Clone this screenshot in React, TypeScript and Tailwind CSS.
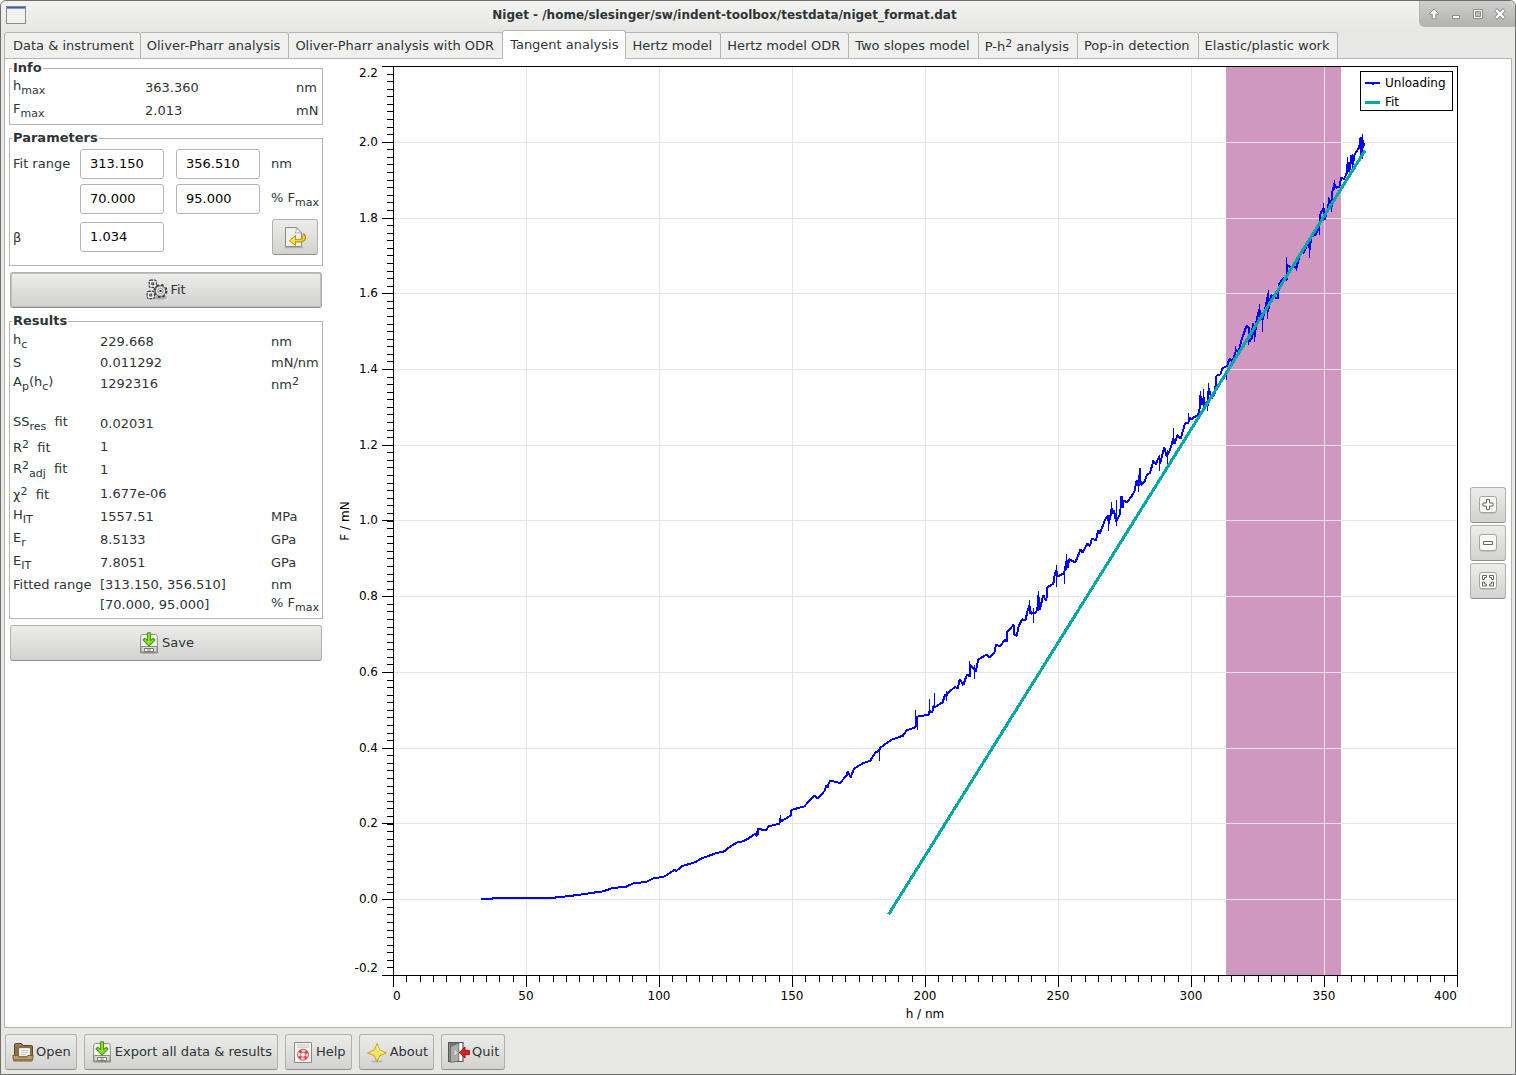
import React from 'react';
import type { ReactNode } from 'react';

const tabs: { label: ReactNode; id: string }[] = [
  { id: 'data', label: 'Data & instrument' },
  { id: 'op', label: 'Oliver-Pharr analysis' },
  { id: 'op-odr', label: 'Oliver-Pharr analysis with ODR' },
  { id: 'tangent', label: 'Tangent analysis' },
  { id: 'hertz', label: 'Hertz model' },
  { id: 'hertz-odr', label: 'Hertz model ODR' },
  { id: 'slopes', label: 'Two slopes model' },
  { id: 'ph2', label: <>P-h<Sup>2</Sup> analysis</> },
  { id: 'popin', label: 'Pop-in detection' },
  { id: 'elastic', label: 'Elastic/plastic work' },
];

type Row = { label: ReactNode; value: string; unit?: ReactNode; height: string };

const results: Row[] = [
  { label: <>h<Sub>c</Sub></>, value: '229.668', unit: 'nm', height: 'h-[21px]' },
  { label: 'S', value: '0.011292', unit: 'mN/nm', height: 'h-[21px]' },
  { label: <>A<Sub>p</Sub>(h<Sub>c</Sub>)</>, value: '1292316', unit: <>nm<Sup>2</Sup></>, height: 'h-[21px]' },
  { label: '', value: '', height: 'h-[18px]' },
  { label: <>SS<Sub>res</Sub>&nbsp; fit</>, value: '0.02031', height: 'h-[23px]' },
  { label: <>R<Sup>2</Sup>&nbsp; fit</>, value: '1', height: 'h-[23px]' },
  { label: <>R<Sup>2</Sup><Sub>adj</Sub>&nbsp; fit</>, value: '1', height: 'h-[23px]' },
  { label: <>χ<Sup>2</Sup>&nbsp; fit</>, value: '1.677e-06', height: 'h-6' },
  { label: <>H<Sub>IT</Sub></>, value: '1557.51', unit: 'MPa', height: 'h-[23px]' },
  { label: <>E<Sub>r</Sub></>, value: '8.5133', unit: 'GPa', height: 'h-[23px]' },
  { label: <>E<Sub>IT</Sub></>, value: '7.8051', unit: 'GPa', height: 'h-[23px]' },
  { label: 'Fitted range', value: '[313.150, 356.510]', unit: 'nm', height: 'h-5' },
  { label: '', value: '[70.000, 95.000]', unit: <>% F<Sub>max</Sub></>, height: 'h-5' },
];

function Sub({ children }: { children: ReactNode }) {
  return <span className="align-[-4px] text-[11px] leading-[13px]">{children}</span>;
}

function Sup({ children }: { children: ReactNode }) {
  return <span className="align-[4px] text-[11px] leading-[13px]">{children}</span>;
}

/* ---------- icons ---------- */

function DiskIcon() {
  return (
    <svg viewBox="0 0 22 22" className="h-[22px] w-[22px] shrink-0" aria-hidden="true">
      <ellipse cx="11" cy="20.8" rx="10" ry="1.2" fill="#000" opacity=".2" />
      <path d="M4.5 2.5h13q1.500 0 1.700 2l.3 10v6h-17v-6l.3-10q.2-2 1.700-2z" fill="#f4f4f2" stroke="#8b8d88" />
      <path d="M3 14.5h16v5.5H3z" fill="#d8d9d6" stroke="#8b8d88" />
      <path d="M6.500 16.500h9v3h-9z" fill="#fff" stroke="#777" />
      <path d="M9.500 18h3" stroke="#666" />
      <path d="M9.500.8h3v7.700l3-2.200 1.500 1.500-6 6.400-6-6.400 1.500-1.500 3 2.200z" fill="#8ae234" stroke="#4e9a06" strokeWidth="1.100" strokeLinejoin="round" />
    </svg>
  );
}

function GearsIcon() {
  return (
    <svg viewBox="0 0 22 22" className="h-[22px] w-[22px] shrink-0" aria-hidden="true">
      <ellipse cx="14" cy="18.500" rx="7" ry="2" fill="#000" opacity=".2" />
      <circle cx="14.5" cy="12" r="6" fill="none" stroke="#33383a" strokeWidth="2" strokeDasharray="2.360 2.360" />
      <circle cx="14.5" cy="12" r="5.300" fill="#dcdddb" stroke="#33383a" strokeWidth=".8" />
      <circle cx="14.5" cy="12" r="2.600" fill="#fafafa" stroke="#777" strokeWidth=".8" />
      <rect x="13.500" y="11" width="2" height="2" fill="#222" />
      <rect x="3.2" y="1.2" width="7.2" height="7.2" rx="1.500" fill="#fff" stroke="#33383a" strokeWidth="1.2" strokeDasharray="2.600 .8" />
      <rect x="5.8" y="3.8" width="2" height="2" fill="#fff" stroke="#222" strokeWidth=".9" />
      <rect x="1.2" y="12.4" width="7.2" height="7.2" rx="1.500" fill="#fff" stroke="#33383a" strokeWidth="1.2" strokeDasharray="2.600 .8" />
      <rect x="3.8" y="15" width="2" height="2" fill="#fff" stroke="#222" strokeWidth=".9" />
    </svg>
  );
}

function RevertIcon() {
  return (
    <svg viewBox="0 0 24 24" className="h-6 w-6" aria-hidden="true">
      <path d="M2 22.500h18" stroke="#000" strokeWidth="1.5" opacity=".18" />
      <path d="M2.500 2.500H14l4.500 5.500v13.500h-16z" fill="#f1f1f0" stroke="#888a85" strokeLinejoin="round" />
      <path d="M13 2.5c.6 2.200.3 4-.8 5.600 2.300-.5 4.500-.4 6.300-.1z" fill="#fff" stroke="#999b96" strokeWidth=".8" />
      <path d="M19.700 9.500c3 2.300 1.800 6.200-3.200 6.200h-4.500" fill="none" stroke="#b78b00" strokeWidth="3.600" />
      <path d="M12.500 10.700 6.500 15.700l6 4.800z" fill="#fce94f" stroke="#b78b00" strokeLinejoin="round" />
      <path d="M19.800 10.200c2.300 2 1.400 5.500-3.300 5.500h-6" fill="none" stroke="#f5d53c" strokeWidth="1.700" />
    </svg>
  );
}

function FolderIcon() {
  return (
    <svg viewBox="0 0 22 22" className="h-[22px] w-[22px] shrink-0" aria-hidden="true">
      <path d="M2.500 16V3.500q0-1 1-1h6l1.400 2h8.600q1 0 1 1V16z" fill="#8a6f4c" stroke="#5c4626" />
      <path d="M3.5 4h5.500" stroke="#b29a77" />
      <path d="M7.500 7.500h10V15h-10z" fill="#f7f7f5" stroke="#e6e6e2" />
      <path d="M9 9.500h7M9 11.500h7M9 13.500h5" stroke="#b8b8b4" strokeWidth=".8" />
      <path d="M.8 14.5h5.400l1 1.400h7.600l1-1.400h5.400l-.7 4.800q-.1.7-.8.7H2.300q-.7 0-.8-.7z" fill="#b99b72" stroke="#7a5f3a" />
      <path d="M1.500 18.800h19" stroke="#86683f" />
    </svg>
  );
}

function HelpIcon() {
  return (
    <svg viewBox="0 0 22 22" className="h-[22px] w-[22px] shrink-0" aria-hidden="true">
      <path d="M2.5 1.5h17v20h-17z" fill="#f6f6f5" stroke="#888a85" />
      <path d="M5 4h12M5 6.200h12" stroke="#b9bab7" strokeWidth=".9" />
      <circle cx="11" cy="13.700" r="4" fill="#fff" stroke="#f2dada" strokeWidth="3" />
      <circle cx="11" cy="13.700" r="4" fill="none" stroke="#d94040" strokeWidth="2.600" strokeDasharray="2.600 3.680" strokeDashoffset="-1.840" />
      <circle cx="11" cy="13.700" r="5.500" fill="none" stroke="#c33" strokeWidth=".8" />
      <circle cx="11" cy="13.700" r="2.500" fill="#fff" stroke="#c33" strokeWidth=".8" />
    </svg>
  );
}

function StarIcon() {
  return (
    <svg viewBox="0 0 22 22" className="h-[22px] w-[22px] shrink-0" aria-hidden="true">
      <ellipse cx="11" cy="20.500" rx="6" ry="1.2" fill="#000" opacity=".15" />
      <path d="M11 2.500l2.600 6.500 6.900 3-6.900 2.700L11 21l-2.600-6.300L1.500 12l6.900-3z" fill="#f6e264" stroke="#c4a61c" strokeLinejoin="round" />
      <path d="M11 5.200l1.900 4.700 4.500 2" fill="none" stroke="#fff8c0" strokeWidth=".9" />
    </svg>
  );
}

function QuitIcon() {
  return (
    <svg viewBox="0 0 22 22" className="h-[22px] w-[22px] shrink-0" aria-hidden="true">
      <path d="M.600 1.500h14.400v19H.6z" fill="#fff" stroke="#555753" strokeWidth="1.2" />
      <path d="M1.200 2h9.500v18H1.200z" fill="#6f7173" />
      <path d="M2.500 21.500V5.500L10.800 2v18z" fill="#a9aba8" stroke="#6a6c69" strokeWidth=".8" />
      <path d="M6.500 9.700l2 1.800-2 1.800" fill="none" stroke="#f4f4f4" strokeWidth="1.1" />
      <path d="M11.300 11.500 17 6v3.400h4.500v4.200H17V17z" fill="#e02020" stroke="#930d0d" strokeWidth=".9" strokeLinejoin="round" />
    </svg>
  );
}

function ZoomGlyph({ d }: { d: string }) {
  return (
    <svg viewBox="0 0 18 18" className="h-[18px] w-[18px]" aria-hidden="true">
      <rect x=".5" y="1" width="17" height="16.5" rx="2.5" fill="#777" opacity=".5" />
      <rect x=".5" y=".5" width="17" height="16" rx="2.5" fill="#f9f9f8" stroke="#a5a6a3" />
      <path d={d} fill="#fff" stroke="#666864" />
    </svg>
  );
}

/* ---------- chart ---------- */

// Recorded curve, kept as runs in thirds of a unit from each run's origin.
const trace = [
  {
    x: 340, y: 860,
    points: '423,117 458,117 459,114 645,114 648,111 685,109 710,105 735,102 760,98 790,94 818,84 858,80 880,70 918,66 940,55 972,50',
  },
  {
    x: 660, y: 600,
    points: '12,830 45,809 49,813 65,799 110,785 120,777 167,760 193,754 213,738 230,728 248,724 266,715 284,702 290,708 294,686 319,692 325,679 358,671 361,656 363,664 392,647 394,630 433,619 463,586 473,596 496,570 497,560 501,556 503,562 507,548 511,542 540,549 560,526 563,515 572,532 582,506 610,489 631,482 645,459 657,451 661,443 693,420 720,410 728,408 740,391 765,382 769,378 770,350 806,344 808,333 817,337 821,315 824,322 848,307 855,285 860,285 864,278 885,261 893,266 899,238 910,255 921,223 929,230 930,193 943,208 947,215 955,179 979,164 989,172 1003,158 1008,134 1021,139 1034,120 1041,125 1042,95 1061,74 1063,103 1070,108 1076,78 1087,57 1096,62',
  },
  {
    x: 940, y: 370,
    points: '256,752 264,718 268,705 273,732 281,728 288,728 294,705 295,675 299,720 310,675 316,690 319,690 322,652 340,641 345,610 349,600 352,620 372,610 374,600 380,570 382,595 388,567 406,578 422,537 427,548 443,520 450,528 455,507 468,510 475,480 479,492 495,450 503,437 507,460 515,415 518,432 522,422 528,455 541,430 543,380 547,380 549,415 551,391 561,397 575,378 583,365 590,332 596,348 600,295 602,345 613,336 622,312 630,310 640,272 647,283 657,260 660,280 673,233 680,260 690,240 700,205 704,222 712,195 722,207 735,160 745,160 747,142 753,148 773,135 778,125 781,75 787,105 791,82 794,110 800,95 803,108 806,55 815,85 825,70 829,17',
  },
  {
    x: 1180, y: 120,
    points: '109,767 121,763 127,745 142,738 145,725 150,715 157,728 168,690 175,700 183,665 200,616 207,625 208,665 215,655 219,608 224,650 230,600 238,568 243,585 248,600 258,555 265,520 264,575 273,525 285,532 293,535 298,490 310,475 320,480 320,435 330,440 343,440 349,445 360,405 373,395 385,365 390,390 393,350 407,345 418,320 420,285 426,272 431,265 434,300 445,260 447,235 455,262 457,215 463,190 468,203 478,200 484,172 492,178 500,160 503,128 508,155 514,105 518,135 524,103 538,82 540,55 544,115 547,52 549,85 552,70',
  },
];

const spikes = [
  'M780.5 815v8M879.5 748v12.500M915.500 710v16M917.500 718v12M934.500 693v15M969.500 661v14M974.500 665v14M929 699v12M946 691v10M758.500 829v6',
  'M1029.500 600v14M1033.500 608v15M1038.500 591v20M1056.500 565v22M1066.500 554v16M1064.500 570v14M1108.500 515v16M1111.500 502v14M1116.500 500v26M1138.500 478v14M1159.500 455v16M1173.500 428v16M1167 450v16M1188.500 413v10',
  'M1200.500 391v15M1203.500 389v20M1207 391v20M1208.500 383v14M1226.500 372v8M1235.500 346v10M1248.500 337v8M1254.500 328v14M1259.500 304v14M1262.500 315v17M1268.500 290v14M1267.500 303v16M1286.500 257v20M1296.500 262v9M1309.500 246v12M1319.500 220v15M1323.500 203v18M1328.500 197v10M1331.500 200v12M1334.500 180v10M1347.500 157v13M1352.500 154v14M1360.500 137v20M1362.500 134v25',
];

const xLabels = [50, 100, 150, 200, 250, 300, 350];
const yLabels = ['2.0', '1.8', '1.6', '1.4', '1.2', '1.0', '0.8', '0.6', '0.4', '0.2', '0.0'];
const yMajor = [142, 218, 293, 369, 445, 520, 596, 672, 748, 823, 899];

function Chart() {
  const xMinor = Array.from({ length: 81 }, (_, i) => 393 + Math.round(i * 13.3));
  const yMinor = Array.from({ length: 121 }, (_, i) => 66 + Math.round(i * 7.575)).filter((y) => y <= 975);

  return (
    <svg
      viewBox="331 59 1129 968"
      className="block h-auto w-full font-['DejaVu_Sans',sans-serif] text-[12px]"
      role="img"
      aria-label="F / mN against h / nm"
    >
      <g shapeRendering="crispEdges" fill="none">
        <rect x="1226" y="67" width="115" height="908" fill="#d098c0" />
        {xLabels.map((v) => (
          <path key={v} d={`M${393.5 + v * 2.66} 67V975`} stroke="#e5e5e5" />
        ))}
        {yMajor.map((y) => (
          <path key={y} d={`M394 ${y + 0.5}H1457`} stroke="#e5e5e5" />
        ))}

        {trace.map((run) => (
          <g key={run.x} transform={`translate(${run.x} ${run.y}) scale(0.33333)`}>
            <polyline points={run.points} stroke="#0000ff" strokeWidth="6" strokeLinejoin="bevel" />
          </g>
        ))}
        {spikes.map((d) => (
          <path key={d} d={d} stroke="#0000ff" />
        ))}
        <path d="M888.500 914.500 1365 150.500" stroke="#00a8a8" strokeWidth="3" />

        <rect x="393.5" y="66.5" width="1064" height="909" stroke="#000" />
        {xMinor.filter((x) => x <= 1457).map((x) => (
          <path key={x} d={`M${x + 0.5} 976v6`} stroke="#000" />
        ))}
        {yMinor.map((y) => (
          <path key={y} d={`M387 ${y + 0.5}h6`} stroke="#000" />
        ))}
        {[0, ...xLabels, 400].map((v) => (
          <path key={v} d={`M${393.5 + v * 2.66} 976v11`} stroke="#000" />
        ))}
        {[66, ...yMajor, 975].map((y) => (
          <path key={y} d={`M382 ${y + 0.5}h11`} stroke="#000" />
        ))}

        <rect x="1360.5" y="71.5" width="92" height="39" fill="#fff" stroke="#000" />
        <path d="M1365 83h15" stroke="#0000ff" strokeWidth="2" />
        <path d="M1372 84.500h2" stroke="#0000ff" />
        <path d="M1365 102.500h15" stroke="#00a8a8" strokeWidth="3" />
      </g>

      <g fill="#000">
        <text x="1385" y="87">Unloading</text>
        <text x="1385" y="106">Fit</text>
        <text x="378" y="77" textAnchor="end">2.2</text>
        {yLabels.map((label, i) => (
          <text key={label} x="378" y={yMajor[i] + 4} textAnchor="end">{label}</text>
        ))}
        <text x="378" y="972" textAnchor="end">-0.2</text>
        <text x="393" y="1000">0</text>
        {xLabels.map((v) => (
          <text key={v} x={393 + v * 2.66} y="1000" textAnchor="middle">{v}</text>
        ))}
        <text x="1457" y="1000" textAnchor="end">400</text>
        <text x="925" y="1018" textAnchor="middle">h / nm</text>
        <text transform="translate(349 521) rotate(-90)" textAnchor="middle">F / mN</text>
      </g>
    </svg>
  );
}

/* ---------- widgets ---------- */

const buttonBase =
  'flex h-9 items-center justify-center rounded-[3px] border border-[#b0b0ad] border-b-[#8f8f8c] bg-linear-to-b from-[#ececeb] to-[#d2d2d0]';

function ToolButton({ icon, children }: { icon: ReactNode; children: ReactNode }) {
  return (
    <button type="button" className={`${buttonBase} gap-0.5 pr-[5px] pl-1.5 whitespace-nowrap`}>
      {icon}
      <span className="pb-0.5">{children}</span>
    </button>
  );
}

function Group({ title, className, children }: { title: string; className: string; children: ReactNode }) {
  return (
    <fieldset className={`min-w-0 border border-[#b4b4b1] ${className}`}>
      <legend className="-ml-px px-px pb-0.5 leading-[13px] font-bold">{title}</legend>
      {children}
    </fieldset>
  );
}

function NumberField({ id, label, value, className = '' }: { id: string; label?: string; value: string; className?: string }) {
  return (
    <input
      id={id}
      aria-label={label}
      defaultValue={value}
      className={`h-[30px] w-full min-w-0 rounded-[3px] border border-[#b4b4b1] bg-white px-[9px] pb-0.5 text-black ${className}`}
    />
  );
}

function Sidebar() {
  return (
    <div className="flex w-[314px] shrink-0 flex-col gap-1.5 pt-0.5">
      <Group title="Info" className="pr-[3px] pb-0.5 pl-[3px]">
        <table className="w-full table-fixed whitespace-nowrap">
          <tbody>
            <tr className="h-[23px]">
              <th scope="row" className="w-[132px] text-left font-normal">h<Sub>max</Sub></th>
              <td className="w-[151px]">363.360</td>
              <td>nm</td>
            </tr>
            <tr className="h-[23px]">
              <th scope="row" className="text-left font-normal">F<Sub>max</Sub></th>
              <td>2.013</td>
              <td>mN</td>
            </tr>
          </tbody>
        </table>
      </Group>

      <Group title="Parameters" className="pt-[3px] pb-2.5 pl-[3px]">
        <div className="grid grid-cols-[55px_84px_84px_minmax(0,1fr)] items-center gap-x-3 gap-y-[5px] whitespace-nowrap">
          <label htmlFor="range-from" className="pb-0.5">Fit range</label>
          <NumberField id="range-from" value="313.150" />
          <NumberField id="range-to" label="Fit range to, nm" value="356.510" />
          <span className="-ml-px pb-0.5">nm</span>

          <NumberField id="percent-from" label="Fit range from, % Fmax" value="70.000" className="col-start-2" />
          <NumberField id="percent-to" label="Fit range to, % Fmax" value="95.000" />
          <span className="-ml-px">% F<Sub>max</Sub></span>

          <label htmlFor="beta">β</label>
          <NumberField id="beta" value="1.034" />
          <button type="button" aria-label="Reset beta" className={`${buttonBase} col-start-4 w-[46px]`}>
            <RevertIcon />
          </button>
        </div>
      </Group>

      <button type="button" className={`${buttonBase} mx-px gap-0.5 inset-ring inset-ring-[#c0c0bd]`}>
        <GearsIcon />
        <span className="pb-0.5">Fit</span>
      </button>

      <Group title="Results" className="pt-0.5 pr-[3px] pb-1 pl-[3px]">
        <table className="w-full table-fixed whitespace-nowrap">
          <colgroup>
            <col className="w-[87px]" />
            <col className="w-[171px]" />
            <col />
          </colgroup>
          <tbody>
            {results.map((row, i) => (
              <tr key={i} className={row.height}>
                <th scope="row" className="text-left font-normal">{row.label}</th>
                <td>{row.value}</td>
                <td>{row.unit}</td>
              </tr>
            ))}
          </tbody>
        </table>
      </Group>

      <button type="button" className={`${buttonBase} mx-px gap-0.5`}>
        <DiskIcon />
        <span className="pb-0.5">Save</span>
      </button>
    </div>
  );
}

function TitleBar() {
  return (
    <header className="flex h-[29px] items-start rounded-t-md bg-linear-to-b from-[#f3f3f2] to-[#e7e7e5]">
      <svg viewBox="0 0 20 18" className="mt-[5px] ml-[5px] h-[18px] w-5" aria-hidden="true">
        <rect x=".5" y=".5" width="19" height="17" fill="#f1f1ef" stroke="#888a85" />
        <path d="M1 1.500h18" stroke="#3465a4" />
        <path d="M1 2.500h18" stroke="#729fcf" />
      </svg>
      <h1 className="min-w-0 flex-1 truncate pt-[6px] pl-1 text-center text-[12px] leading-4 font-bold">
        Niget - /home/slesinger/sw/indent-toolbox/testdata/niget_format.dat
      </h1>
      <div className="flex h-[26px] w-24 rounded-tr-md rounded-bl-md border-b border-l border-[#b4b4b1] bg-linear-to-b from-[#cfcfce] to-[#b2b2b0] pl-[3px]">
        <button type="button" aria-label="Shade" className="grid w-[22px] place-items-center">
          <svg viewBox="0 0 12 12" className="h-3 w-3"><path d="M6 .800 11 6.200H7.800v4.600H4.200V6.200H1z" fill="#fff" stroke="#8a8a88" strokeLinejoin="round" /></svg>
        </button>
        <button type="button" aria-label="Minimize" className="grid w-[22px] place-items-center">
          <svg viewBox="0 0 12 12" className="h-3 w-3"><path d="M2.500 7.500h7v3h-7z" fill="#fff" stroke="#8a8a88" /></svg>
        </button>
        <button type="button" aria-label="Maximize" className="grid w-[22px] place-items-center">
          <svg viewBox="0 0 12 12" className="h-3 w-3"><path d="M1.500 1.500h9v9h-9z" fill="#fff" stroke="#8a8a88" /><path d="M3.500 3.500h5v5h-5z" fill="#bcbcba" stroke="#8a8a88" /></svg>
        </button>
        <button type="button" aria-label="Close" className="grid w-[22px] place-items-center">
          <svg viewBox="0 0 12 12" className="h-3 w-3"><path d="M1.500 1.500l9 9M10.500 1.500l-9 9" stroke="#8a8a88" strokeWidth="4" /><path d="M2 2l8 8M10 2l-8 8" stroke="#fff" strokeWidth="2.400" /></svg>
        </button>
      </div>
    </header>
  );
}

function TabBar() {
  return (
    <nav role="tablist" className="relative z-10 -mb-px ml-[3px] flex h-[29px] items-end whitespace-nowrap">
      {tabs.map((tab, i) =>
        tab.id === 'tangent' ? (
          <button
            key={tab.id}
            type="button"
            role="tab"
            aria-selected="true"
            className="-ml-px h-[29px] rounded-t-[3px] border border-b-0 border-[#b4b4b1] bg-white px-[7px] pb-px"
          >
            {tab.label}
          </button>
        ) : (
          <button
            key={tab.id}
            type="button"
            role="tab"
            aria-selected="false"
            className={`h-[27px] rounded-tr-[3px] border-t border-r border-b border-[#b4b4b1] bg-[#f0f0ef] ${
              i === 0 ? 'rounded-tl-[3px] border-l pr-1.5 pl-2' : 'pr-2 pl-1.5'
            }`}
          >
            {tab.label}
          </button>
        ),
      )}
    </nav>
  );
}

export default function App() {
  return (
    <div className="flex min-h-screen flex-col rounded-t-md border border-[#6f6f6e] bg-[#e7e7e5] font-['DejaVu_Sans',sans-serif] text-[13px] leading-[15px] text-[#2e3436]">
      <TitleBar />
      <TabBar />

      <main className="mx-[3px] flex flex-1 border border-[#b4b4b1] bg-white pl-1">
        <Sidebar />
        <div className="ml-2 min-w-0 flex-1">
          <Chart />
        </div>
        <div className="mr-[5px] ml-2.5 flex w-9 shrink-0 flex-col justify-center gap-0.5">
          <button type="button" aria-label="Zoom in" className={buttonBase}>
            <ZoomGlyph d="M7.500 3.500h3v3.500h3.500v3h-3.500v3.500h-3v-3.500H4V7h3.500z" />
          </button>
          <button type="button" aria-label="Zoom out" className={buttonBase}>
            <ZoomGlyph d="M4.500 7.500h9v3h-9z" />
          </button>
          <button type="button" aria-label="Zoom to fit" className={buttonBase}>
            <ZoomGlyph d="M3.500 7.500v-4h4v2h-2v2zM14.500 7.500v-4h-4v2h2v2zM3.500 10v4h4v-2h-2v-2zM14.500 10v4h-4v-2h2v-2z" />
          </button>
        </div>
      </main>

      <footer className="flex flex-wrap gap-[7px] px-1 pt-1.5 pb-1">
        <ToolButton icon={<FolderIcon />}>Open</ToolButton>
        <ToolButton icon={<DiskIcon />}>Export all data &amp; results</ToolButton>
        <ToolButton icon={<HelpIcon />}>Help</ToolButton>
        <ToolButton icon={<StarIcon />}>About</ToolButton>
        <ToolButton icon={<QuitIcon />}>Quit</ToolButton>
      </footer>
    </div>
  );
}
